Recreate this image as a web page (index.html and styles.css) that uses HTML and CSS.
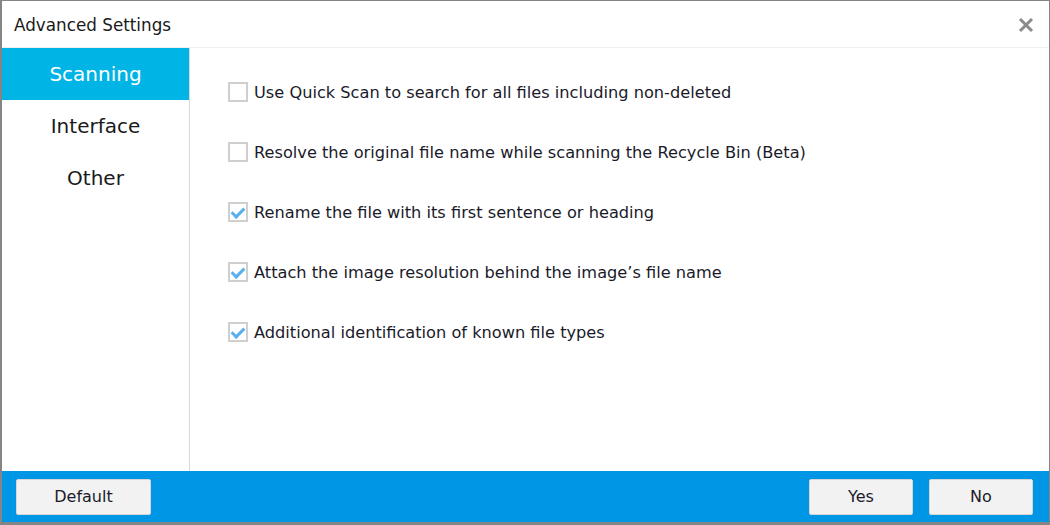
FILE: index.html
```html
<!DOCTYPE html>
<html>
<head>
    <meta charset="UTF-8">
    <title>Advanced Settings</title>
    <link rel="stylesheet" href="styles.css">
</head>

<body>
<div class="window">
    <div class="titlebar">
        <span class="title">Advanced Settings</span>
        <span class="close">
            <svg width="16" height="16" viewBox="0 0 16 16">
                <path d="M2 2 L14 14 M14 2 L2 14" stroke="#8a8a8a" stroke-width="3"/>
            </svg>
        </span>
    </div>

    <div class="main">
        <ul class="nav">
            <li class="nav__item nav__item--active">Scanning</li>
            <li class="nav__item">Interface</li>
            <li class="nav__item">Other</li>
        </ul>

        <div class="options">
            <label class="option">
                <span class="box"></span>
                Use Quick Scan to search for all files including non-deleted
            </label>
            <label class="option">
                <span class="box"></span>
                Resolve the original file name while scanning the Recycle Bin (Beta)
            </label>
            <label class="option">
                <span class="box box--checked"></span>
                Rename the file with its first sentence or heading
            </label>
            <label class="option">
                <span class="box box--checked"></span>
                Attach the image resolution behind the image’s file name
            </label>
            <label class="option">
                <span class="box box--checked"></span>
                Additional identification of known file types
            </label>
        </div>
    </div>

    <div class="footer">
        <button class="btn btn--wide">Default</button>
        <div class="footer__right">
            <button class="btn">Yes</button>
            <button class="btn">No</button>
        </div>
    </div>
</div>
</body>
</html>
```

FILE: styles.css
```css
* {
    padding: 0;
    margin: 0;
    box-sizing: border-box;
}

html, body {
    height: 100%;
}

body {
    font-family: "DejaVu Sans", sans-serif;
    background-color: white;
    overflow: hidden;
}

.window {
    height: 525px;
    display: flex;
    flex-direction: column;
    border: 1px solid #858585;
    border-left-width: 2px;
    border-bottom-width: 3px;
    color: #1a1a1a;
}

.titlebar {
    height: 47px;
    flex: none;
    display: flex;
    align-items: center;
    justify-content: space-between;
    padding: 1px 15px 0 12px;
    border-bottom: 1px solid #f0f0f0;
}

.title {
    font-size: 16.8px;
}

.close {
    display: flex;
}

.main {
    flex: 1;
    display: flex;
    min-height: 0;
}

.nav {
    width: 188px;
    flex: none;
    list-style: none;
    border-right: 1px solid #d9d9d9;
}

.nav__item {
    height: 52px;
    display: flex;
    align-items: center;
    justify-content: center;
    font-size: 20px;
}

.nav__item--active {
    background-color: #00b4e6;
    color: white;
}

.options {
    flex: 1;
    padding: 34px 0 0 38px;
    display: flex;
    flex-direction: column;
    gap: 40px;
}

.option {
    display: flex;
    align-items: center;
    gap: 6px;
    height: 20px;
    font-size: 16.2px;
    color: #1a1a2a;
}

.box {
    position: relative;
    width: 20px;
    height: 20px;
    flex: none;
    border: 2px solid #cfcfcf;
    background-color: white;
}

.box--checked::after {
    content: '';
    position: absolute;
    left: 4px;
    top: 1px;
    width: 5px;
    height: 10px;
    border: solid #5ab0ee;
    border-width: 0 3px 3px 0;
    transform: rotate(45deg);
}

.footer {
    height: 51px;
    flex: none;
    display: flex;
    align-items: center;
    justify-content: space-between;
    padding: 0 16px 0 14px;
    background-color: #0096e6;
}

.footer__right {
    display: flex;
    gap: 16px;
}

.btn {
    width: 104px;
    height: 36px;
    font-family: "DejaVu Sans", sans-serif;
    font-size: 16px;
    color: #1a1a2a;
    background-color: #f2f2f2;
    border: 1px solid #d6d6d6;
    border-radius: 2px;
}

.btn--wide {
    width: 135px;
}
```
